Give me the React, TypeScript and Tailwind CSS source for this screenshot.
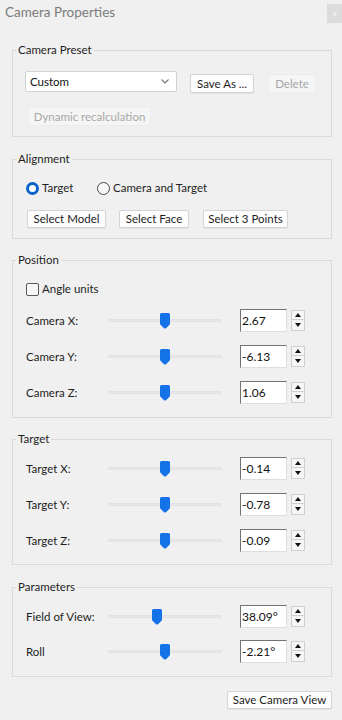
import React from "react";

const font = { fontFamily: "Lato, 'Open Sans', sans-serif" };

type Row = { label: string; value: string; pos: number };

const positionRows: Row[] = [
  { label: "Camera X:", value: "2.67", pos: 57 },
  { label: "Camera Y:", value: "-6.13", pos: 57 },
  { label: "Camera Z:", value: "1.06", pos: 57 },
];

const targetRows: Row[] = [
  { label: "Target X:", value: "-0.14", pos: 57 },
  { label: "Target Y:", value: "-0.78", pos: 57 },
  { label: "Target Z:", value: "-0.09", pos: 57 },
];

const paramRows: Row[] = [
  { label: "Field of View:", value: "38.09°", pos: 49 },
  { label: "Roll", value: "-2.21°", pos: 57 },
];

function Group({
  title,
  className,
  children,
}: {
  title: string;
  className: string;
  children: React.ReactNode;
}) {
  return (
    <fieldset className={`ml-3 w-[320px] border border-[#dadada] ${className}`}>
      <legend className="ml-[3px] px-[2px] text-[11.5px] leading-[16px] text-[#1e1e1e]">
        {title}
      </legend>
      {children}
    </fieldset>
  );
}

function Button({
  children,
  className,
  disabled,
}: {
  children: React.ReactNode;
  className: string;
  disabled?: boolean;
}) {
  return (
    <div
      className={`flex items-center justify-center rounded-[2px] text-[11.5px] ${
        disabled
          ? "bg-[#f5f5f5] text-[#a8a8a8] border border-[#ececec]"
          : "bg-[#fdfdfd] text-[#1e1e1e] border border-[#d4d4d4] shadow-[0_1px_1px_rgba(0,0,0,0.06)]"
      } ${className}`}
    >
      {children}
    </div>
  );
}

function Thumb() {
  return (
    <svg width="10" height="16" viewBox="0 0 10 16">
      <path
        d="M1.5 0 H8.5 Q10 0 10 1.5 V10.5 Q10 11.5 9 12.3 L6 15.2 Q5 16 4 15.2 L1 12.3 Q0 11.5 0 10.5 V1.5 Q0 0 1.5 0 Z"
        fill="#1473e6"
      />
    </svg>
  );
}

function Spinner() {
  return (
    <div className="flex w-[14px] flex-col">
      <div className="flex h-[10px] items-center justify-center border border-[#cfcfcf] bg-[#f6f6f6]">
        <svg width="6" height="4" viewBox="0 0 6 4">
          <path d="M0 4 L3 0 L6 4 Z" fill="#111" />
        </svg>
      </div>
      <div className="flex h-[11px] items-center justify-center border border-t-0 border-[#cfcfcf] bg-[#f6f6f6]">
        <svg width="6" height="4" viewBox="0 0 6 4">
          <path d="M0 0 L6 0 L3 4 Z" fill="#111" />
        </svg>
      </div>
    </div>
  );
}

function SliderRow({ row }: { row: Row }) {
  return (
    <div className="flex h-[23px] items-center">
      <div className="w-[82px] text-[11.5px] text-[#1e1e1e]">{row.label}</div>
      <div className="relative flex h-[23px] w-[114px] items-center">
        <div className="h-[3px] w-full border-y border-[#e2e2e2] bg-[#e8e8e8]" />
        <div
          className="absolute top-[4px] flex"
          style={{ left: `${row.pos - 5}px` }}
        >
          <Thumb />
        </div>
      </div>
      <div className="ml-[18px] flex h-[23px] w-[47px] items-center border border-t-[#727272] border-l-[#727272] border-r-[#dedede] border-b-[#dedede] bg-white pl-[1px] text-[12px] text-[#111]">
        {row.value}
      </div>
      <div className="ml-[4px]">
        <Spinner />
      </div>
    </div>
  );
}

export default function App() {
  return (
    <div className="h-[720px] w-[342px] overflow-hidden bg-[#f0f0f0]" style={font}>
      <div className="flex h-[24px] items-start justify-between">
        <div className="pl-[5px] pt-[3px] text-[13.5px] leading-[18px] text-[#7c7c7c]">
          Camera Properties
        </div>
        <div className="mt-[4px] flex h-[19px] w-[15px] items-center justify-center bg-[#dcdcdc] text-[11px] leading-none text-[#f4f4f4]">
          ×
        </div>
      </div>

      <Group title="Camera Preset" className="mt-[18px]">
        <div className="pb-[10px] pl-[12px] pt-[13px]">
          <div className="flex items-start">
            <div className="flex h-[21px] w-[152px] items-center justify-between rounded-[2px] border border-[#d2d2d2] bg-white pl-[4px] pr-[7px] text-[11.5px] text-[#111]">
              <span>Custom</span>
              <svg width="8" height="5" viewBox="0 0 8 5">
                <path d="M0.5 0.5 L4 4 L7.5 0.5" fill="none" stroke="#777" strokeWidth="1.1" />
              </svg>
            </div>
            <Button className="ml-[13px] mt-[3px] h-[19px] w-[64px]">Save As ...</Button>
            <Button className="ml-[14px] mt-[3px] h-[19px] w-[48px]" disabled>
              Delete
            </Button>
          </div>
          <Button className="ml-[3px] mt-[14px] h-[19px] w-[123px]" disabled>
            Dynamic recalculation
          </Button>
        </div>
      </Group>

      <Group title="Alignment" className="mt-[14px]">
        <div className="pb-[10px] pl-[13px] pt-[13px]">
          <div className="flex h-[16px] items-center text-[11.5px] text-[#1e1e1e]">
            <div className="flex w-[71px] items-center">
              <div className="h-[13px] w-[13px] rounded-full border-[3.5px] border-[#0b62c8] bg-white" />
              <span className="ml-[3px]">Target</span>
            </div>
            <div className="flex items-center">
              <div className="h-[13px] w-[13px] rounded-full border border-[#4a4a4a] bg-[#f7f7f7]" />
              <span className="ml-[3px]">Camera and Target</span>
            </div>
          </div>
          <div className="mt-[14px] flex">
            <Button className="ml-[1px] h-[18px] w-[79px]">Select Model</Button>
            <Button className="ml-[13px] h-[18px] w-[70px]">Select Face</Button>
            <Button className="ml-[14px] h-[18px] w-[85px]">Select 3 Points</Button>
          </div>
        </div>
      </Group>

      <Group title="Position" className="mt-[13px]">
        <div className="pb-[13px] pl-[13px] pt-[13px]">
          <div className="flex h-[16px] items-center text-[11.5px] text-[#1e1e1e]">
            <div className="h-[13px] w-[13px] rounded-[2px] border border-[#5a5a5a] bg-[#f7f7f7]" />
            <span className="ml-[3px]">Angle units</span>
          </div>
          <div className="mt-[12px] flex flex-col gap-[13px]">
            {positionRows.map((r) => (
              <SliderRow key={r.label} row={r} />
            ))}
          </div>
        </div>
      </Group>

      <Group title="Target" className="mt-[13px]">
        <div className="flex flex-col gap-[13px] pb-[12px] pl-[13px] pt-[10px]">
          {targetRows.map((r) => (
            <SliderRow key={r.label} row={r} />
          ))}
        </div>
      </Group>

      <Group title="Parameters" className="mt-[14px]">
        <div className="flex flex-col gap-[12px] pb-[13px] pl-[13px] pt-[10px]">
          {paramRows.map((r) => (
            <SliderRow key={r.label} row={r} />
          ))}
        </div>
      </Group>

      <div className="mt-[14px] flex w-[332px] justify-end">
        <Button className="h-[18px] w-[105px]">Save Camera View</Button>
      </div>
    </div>
  );
}
